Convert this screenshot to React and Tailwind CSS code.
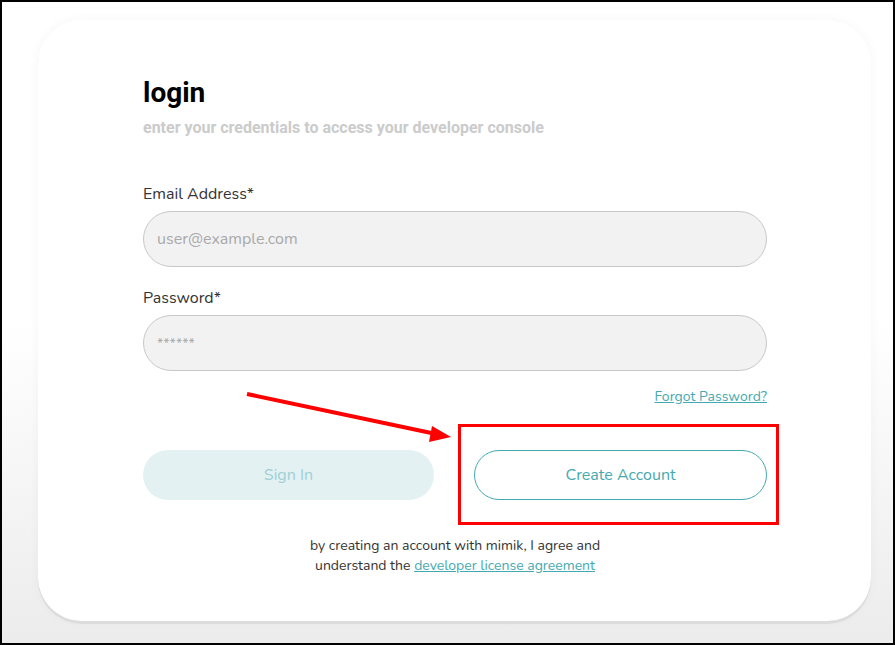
import React from 'react';

const teal = 'text-[#45a9b1]';

const App = () => {
    return (
        <div className="relative h-[645px] w-[895px] overflow-hidden border-2 border-black bg-gradient-to-b from-white via-white to-[#ececec]">
            {/* CARD */}
            <div className="ml-[36px] mt-[18px] h-[601px] w-[833px] rounded-[44px] bg-white pl-[105px] pr-[104px] pt-[56px] shadow-[0_3px_0_#dcdcdc,0_0_12px_rgba(0,0,0,0.04)]">
                <h1 className="text-[28px] font-bold leading-[34px] text-black [font-family:Roboto,sans-serif]">
                    login
                </h1>
                <p className="mt-[7px] text-[16px] font-bold leading-[22px] text-[#cbcbcb] [font-family:Roboto,sans-serif]">
                    enter your credentials to access your developer console
                </p>

                <form className="mt-[43px] [font-family:Nunito,Lato,sans-serif]">
                    <label className="block text-[16px] leading-[24px] text-[#333]">
                        Email Address*
                    </label>
                    <input
                        type="text"
                        placeholder="user@example.com"
                        className="mt-[5px] block h-[56px] w-full rounded-full border border-[#c8c8c8] bg-[#f2f2f2] px-[13px] text-[16px] outline-none placeholder:text-[#a9a9a9]"
                    />

                    <label className="mt-[19px] block text-[16px] leading-[24px] text-[#333]">
                        Password*
                    </label>
                    <input
                        type="text"
                        placeholder="******"
                        className="mt-[5px] block h-[56px] w-full rounded-full border border-[#c8c8c8] bg-[#f2f2f2] px-[13px] text-[14px] outline-none placeholder:text-[#a9a9a9]"
                    />

                    <div className="mt-[16px] flex justify-end">
                        <a className={`text-[14px] leading-[20px] underline ${teal}`}>
                            Forgot Password?
                        </a>
                    </div>

                    <div className="mt-[43px] flex gap-[40px]">
                        <button
                            type="button"
                            className="h-[50px] flex-1 rounded-full bg-[#e4f1f3] text-[16px] text-[#9dd0d6]"
                        >
                            Sign In
                        </button>
                        <button
                            type="button"
                            className={`h-[50px] flex-1 rounded-full border border-[#45a9b1] bg-white text-[16px] ${teal}`}
                        >
                            Create Account
                        </button>
                    </div>

                    <p className="mt-[36px] text-center text-[14px] leading-[20px] text-[#333]">
                        by creating an account with mimik, I agree and
                        <br />
                        understand the{' '}
                        <a className={`underline ${teal}`}>
                            developer license agreement
                        </a>
                    </p>
                </form>
            </div>

            {/* ANNOTATIONS */}
            <div className="absolute left-[456px] top-[422px] h-[101px] w-[321px] border-[3px] border-[#ff0000]" />
            <svg
                className="absolute left-0 top-0"
                width="891"
                height="641"
                viewBox="2 2 891 641"
            >
                <line x1="247" y1="394" x2="436" y2="434" stroke="#ff0000" strokeWidth="4" />
                <polygon points="451,437 432,426 429,442" fill="#ff0000" />
            </svg>
        </div>
    );
};

export default App;
